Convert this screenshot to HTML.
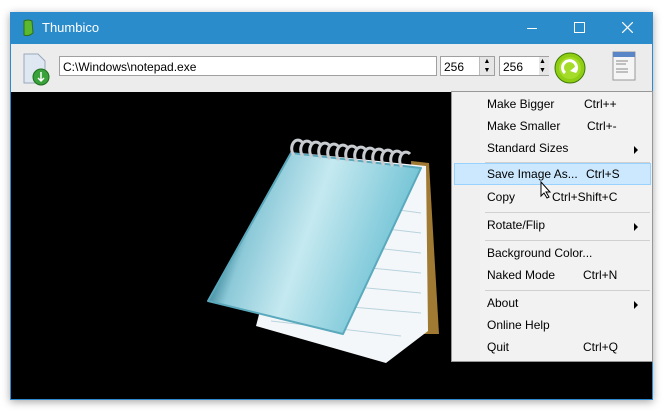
<!DOCTYPE html>
<html><head><style>
body{margin:0;width:663px;height:410px;background:#fff;position:relative;overflow:hidden;font-family:"Liberation Sans",sans-serif;}
.win{position:absolute;left:10px;top:12px;width:641px;height:386px;border:1px solid #2b8ad0;box-shadow:0 2px 8px rgba(0,0,0,.35);background:#000;}
.title{position:absolute;left:0;top:0;width:641px;height:31px;background:#2b8ccc;color:#fff;font-size:13px;}
.tool{position:absolute;left:0;top:31px;width:641px;height:48px;background:#ececec;}
.inp{position:absolute;background:#fff;border:1px solid #a0a0a0;height:20px;font-size:12px;line-height:20px;padding-left:3px;box-sizing:border-box;}
.menu{position:absolute;left:440px;top:78px;width:200px;height:269px;background:#f2f2f2;border:1px solid #979797;font-size:12px;color:#000;}
.it{position:absolute;left:35px;height:22px;line-height:22px;}
.sc{position:absolute;height:22px;line-height:22px;}
.sep{position:absolute;left:33px;right:2px;height:1px;background:#d0d0d0;}
.ar{position:absolute;left:182px;width:0;height:0;border-left:4px solid #000;border-top:4px solid transparent;border-bottom:4px solid transparent;}
</style></head><body>
<div class="win">
<div class="title">
<svg style="position:absolute;left:10px;top:6px" width="14" height="19"><path d="M3 2 Q7 0 11 2 L12 14 Q7 18 3 16 Z" fill="#5cb82e" stroke="#2d6e13"/></svg>
<span style="position:absolute;left:31px;top:7px">Thumbico</span>
<div style="position:absolute;left:516px;top:15px;width:10px;height:1px;background:#fff"></div>
<div style="position:absolute;left:563px;top:9px;width:9px;height:9px;border:1px solid #fff"></div>
<svg style="position:absolute;left:611px;top:9px" width="11" height="11"><path d="M0 0L11 11M11 0L0 11" stroke="#fff" stroke-width="1.2"/></svg>
</div>
<div class="tool">
<svg style="position:absolute;left:10px;top:8px" width="30" height="34"><path d="M3 2h14l7 7v22H3z" fill="#dfe7f2" stroke="#9aa8ba"/><circle cx="20" cy="25" r="8" fill="#3aa23a" stroke="#1e6e1e"/><path d="M20 20v9M17 26l3 3 3-3" stroke="#fff" stroke-width="1.5" fill="none"/></svg>
<div class="inp" style="left:48px;top:12px;width:378px">C:\Windows\notepad.exe</div>
<div class="inp" style="left:429px;top:12px;width:55px">256</div>
<div style="position:absolute;left:468px;top:13px;width:14px;height:18px;background:#e6e6e6;border-left:1px solid #bbb;font-size:7px;line-height:9px;text-align:center">▲<br>▼</div>
<div class="inp" style="left:488px;top:12px;width:50px">256</div>
<div style="position:absolute;left:528px;top:13px;width:10px;height:18px;background:#e6e6e6;font-size:7px;line-height:9px">▲<br>▼</div>
<svg style="position:absolute;left:543px;top:8px" width="32" height="32"><circle cx="16" cy="16" r="15" fill="#8fce12" stroke="#3f7a0a"/><circle cx="16" cy="16" r="11" fill="#a5dc2a"/><path d="M11 21a7 7 0 1 1 10-1" stroke="#fff" stroke-width="3" fill="none"/><path d="M22 14l0 7-6-2z" fill="#fff"/></svg>
<svg style="position:absolute;left:601px;top:7px" width="24" height="30"><rect x="1" y="1" width="22" height="28" fill="#f5f5f5" stroke="#999"/><rect x="1" y="1" width="22" height="5" fill="#5a86c8"/><path d="M4 10h12M4 13h10M4 18h12M4 21h12" stroke="#666" stroke-width=".8"/></svg>
</div>
<svg style="position:absolute;left:-10px;top:-12px" width="450" height="410">
<polygon points="410,160 428,162 438,333 418,333" fill="#a07a32"/>
<polygon points="300,152 425,165 427,330 385,362 255,325" fill="#f4f7f9"/>
<g stroke="#b8d3de" stroke-width="1">
<path d="M330 200 L420 212M320 220L420 232M310 240L420 252M300 260L420 272M290 280L420 292M280 300L420 312M270 320L400 335"/>
</g>
<defs><linearGradient id="g" x1="0" y1="0" x2="1" y2="0.3"><stop offset="0" stop-color="#134c5c"/><stop offset=".2" stop-color="#2f7d90"/><stop offset=".3" stop-color="#8cc9d8"/><stop offset=".55" stop-color="#c5e9f0"/><stop offset="1" stop-color="#6bc0d3"/></linearGradient></defs>
<polygon points="290,152 420,167 342,333 207,300" fill="url(#g)" stroke="#5aa9bd" stroke-width="2" stroke-linejoin="round"/>
<g fill="none" stroke="#c8ccd0" stroke-width="3">
<path d="M293 154a6 8 0 0 1 8-13M302 155a6 8 0 0 1 8-13M311 156a6 8 0 0 1 8-13M320 157a6 8 0 0 1 8-13M329 158a6 8 0 0 1 8-13M338 159a6 8 0 0 1 8-13M347 160a6 8 0 0 1 8-13M356 161a6 8 0 0 1 8-13M365 162a6 8 0 0 1 8-13M374 163a6 8 0 0 1 8-13M383 164a6 8 0 0 1 8-13M392 165a6 8 0 0 1 8-13M401 166a6 8 0 0 1 8-13"/>
</g>
</svg>
<div class="menu">
<div style="position:absolute;left:0;top:0;width:28px;height:100%;background:#f0f0f0"></div>
<div style="position:absolute;left:2px;top:71px;width:195px;height:20px;background:#cce8ff;border:1px solid #99d1ff"></div>
<div class="it" style="top:1px">Make Bigger</div><div class="sc" style="left:132px;top:1px">Ctrl++</div>
<div class="it" style="top:23px">Make Smaller</div><div class="sc" style="left:135px;top:23px">Ctrl+-</div>
<div class="it" style="top:45px">Standard Sizes</div><div class="ar" style="top:54px"></div>
<div class="sep" style="top:70px"></div>
<div class="it" style="top:71px">Save Image As...</div><div class="sc" style="left:134px;top:71px">Ctrl+S</div>
<div class="it" style="top:94px">Copy</div><div class="sc" style="left:100px;top:94px">Ctrl+Shift+C</div>
<svg style="position:absolute;left:88px;top:89px" width="12" height="18"><path d="M1 1v14l3-3 3 5 2-1-3-5h4z" fill="#fff" stroke="#000"/></svg>
<div class="sep" style="top:120px"></div>
<div class="it" style="top:122px">Rotate/Flip</div><div class="ar" style="top:131px"></div>
<div class="sep" style="top:148px"></div>
<div class="it" style="top:150px">Background Color...</div>
<div class="it" style="top:172px">Naked Mode</div><div class="sc" style="left:131px;top:172px">Ctrl+N</div>
<div class="sep" style="top:198px"></div>
<div class="it" style="top:200px">About</div><div class="ar" style="top:209px"></div>
<div class="it" style="top:222px">Online Help</div>
<div class="it" style="top:244px">Quit</div><div class="sc" style="left:131px;top:244px">Ctrl+Q</div>
</div>
</div>
</body></html>
